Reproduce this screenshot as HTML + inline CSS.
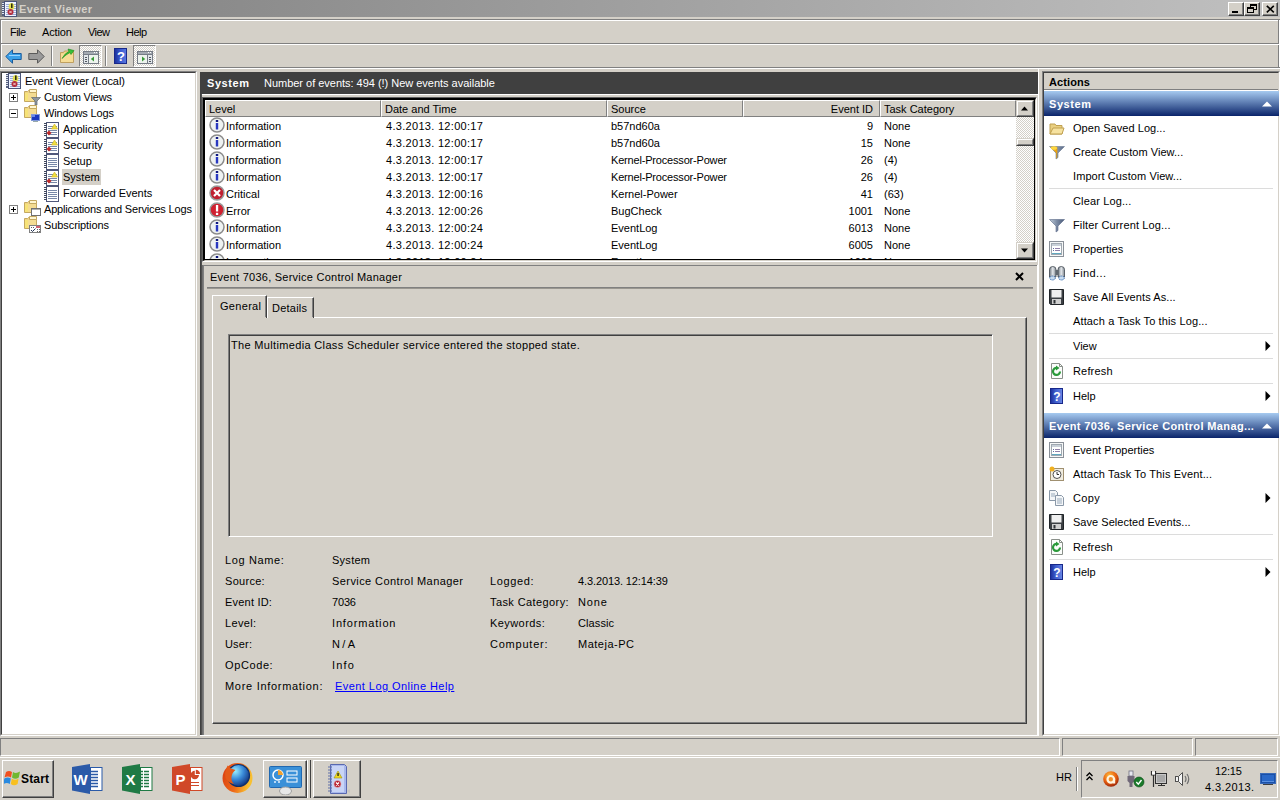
<!DOCTYPE html>
<html><head><meta charset="utf-8"><style>
html,body{margin:0;padding:0;width:1280px;height:800px;overflow:hidden;}
body{position:relative;font-family:"Liberation Sans",sans-serif;font-size:11px;color:#000;}
.a{position:absolute;}
.t{position:absolute;white-space:nowrap;line-height:13px;font-size:11px;}
svg{display:block}
</style></head><body>
<div class="a" style="left:0px;top:0px;width:1280px;height:800px;background:#d4d0c8;"></div>
<div class="a" style="left:0px;top:0px;width:1280px;height:17px;background:linear-gradient(to right,#808080,#c0c0c0);"></div>
<svg class="a" style="left:2px;top:1px" width="15" height="16" viewBox="0 0 15 16"><rect x="0" y="1" width="4" height="14" fill="#56607e"/>
<rect x="2.5" y="0.5" width="12" height="15" fill="#eef3ff" stroke="#4a5478"/>
<rect x="4" y="3" width="10" height="1" fill="#9aaad8"/><rect x="4" y="5" width="10" height="1" fill="#9aaad8"/><rect x="4" y="7" width="10" height="1" fill="#9aaad8"/><rect x="4" y="9" width="10" height="1" fill="#9aaad8"/><rect x="4" y="11" width="10" height="1" fill="#9aaad8"/><rect x="4" y="13" width="10" height="1" fill="#9aaad8"/>
<rect x="0" y="2" width="2" height="1" fill="#dfe4ee"/><rect x="0" y="4" width="2" height="1" fill="#dfe4ee"/><rect x="0" y="6" width="2" height="1" fill="#dfe4ee"/><rect x="0" y="8" width="2" height="1" fill="#dfe4ee"/><rect x="0" y="10" width="2" height="1" fill="#dfe4ee"/><rect x="0" y="12" width="2" height="1" fill="#dfe4ee"/>
<ellipse cx="9.5" cy="5.5" rx="2.8" ry="3.5" fill="#e6e040" opacity="0.9"/><rect x="9" y="2.5" width="1.6" height="4.5" fill="#303010"/>
<circle cx="8.5" cy="11" r="3" fill="#b42a3a"/><path d="M7.3 9.8l2.4 2.4M9.7 9.8l-2.4 2.4" stroke="#f0d0d0" stroke-width="1"/></svg>
<div class="t" style="left:19px;top:3px;font-size:11px;letter-spacing:0.425px;font-weight:bold;color:#d4d0c8;">Event Viewer</div>
<div class="a" style="left:1228px;top:2px;width:16px;height:14px;background:#d4d0c8;border-top:1px solid #ffffff;border-left:1px solid #ffffff;border-right:1px solid #404040;border-bottom:1px solid #404040;box-sizing:border-box;"></div>
<div class="a" style="left:1229px;top:3px;width:14px;height:12px;border-right:1px solid #808080;border-bottom:1px solid #808080;box-sizing:border-box;"></div>
<div class="a" style="left:1232px;top:11px;width:6px;height:2px;background:#000;"></div>
<div class="a" style="left:1244px;top:2px;width:16px;height:14px;background:#d4d0c8;border-top:1px solid #ffffff;border-left:1px solid #ffffff;border-right:1px solid #404040;border-bottom:1px solid #404040;box-sizing:border-box;"></div>
<div class="a" style="left:1245px;top:3px;width:14px;height:12px;border-right:1px solid #808080;border-bottom:1px solid #808080;box-sizing:border-box;"></div>
<div class="a" style="left:1250px;top:4px;width:7px;height:6px;border:1px solid #000;border-top-width:2px;box-sizing:border-box;"></div>
<div class="a" style="left:1247px;top:7px;width:7px;height:6px;border:1px solid #000;border-top-width:2px;box-sizing:border-box;background:#d4d0c8;"></div>
<div class="a" style="left:1262px;top:2px;width:16px;height:14px;background:#d4d0c8;border-top:1px solid #ffffff;border-left:1px solid #ffffff;border-right:1px solid #404040;border-bottom:1px solid #404040;box-sizing:border-box;"></div>
<div class="a" style="left:1263px;top:3px;width:14px;height:12px;border-right:1px solid #808080;border-bottom:1px solid #808080;box-sizing:border-box;"></div>
<svg class="a" style="left:1266px;top:5px" width="9" height="8" viewBox="0 0 9 8"><path d="M0.8 0.8l7 6.5M7.8 0.8l-7 6.5" stroke="#000" stroke-width="1.6"/></svg>
<div class="a" style="left:0px;top:17px;width:1280px;height:1px;background:#d4d0c8;"></div>
<div class="a" style="left:0px;top:18px;width:1280px;height:1px;background:#d4d0c8;"></div>
<div class="a" style="left:0px;top:19px;width:1280px;height:1px;background:#808080;"></div>
<div class="a" style="left:0px;top:20px;width:1280px;height:1px;background:#ffffff;"></div>
<div class="a" style="left:0px;top:19px;width:1px;height:50px;background:#808080;"></div>
<div class="a" style="left:1px;top:20px;width:1px;height:48px;background:#ffffff;"></div>
<div class="a" style="left:1278px;top:19px;width:1px;height:50px;background:#808080;"></div>
<div class="a" style="left:1279px;top:20px;width:1px;height:48px;background:#ffffff;"></div>
<div class="a" style="left:1px;top:43px;width:1278px;height:1px;background:#808080;"></div>
<div class="a" style="left:1px;top:44px;width:1278px;height:1px;background:#ffffff;"></div>
<div class="t" style="left:10px;top:26px;font-size:11px;letter-spacing:-0.573px;">File</div>
<div class="t" style="left:42px;top:26px;font-size:11px;letter-spacing:-0.119px;">Action</div>
<div class="t" style="left:88px;top:26px;font-size:11px;letter-spacing:-0.547px;">View</div>
<div class="t" style="left:126px;top:26px;font-size:11px;letter-spacing:-0.542px;">Help</div>
<div class="a" style="left:0px;top:67px;width:1280px;height:1px;background:#808080;"></div>
<div class="a" style="left:0px;top:68px;width:1280px;height:1px;background:#ffffff;"></div>
<svg class="a" style="left:5px;top:49px" width="17" height="15" viewBox="0 0 17 15"><path d="M0.8 7.5L7.5 0.8v3.7h8.7v6h-8.7v3.7z" fill="#3aa0e8" stroke="#1a5a9a" stroke-width="1"/><path d="M4 6.5h11" stroke="#9ad4ff" stroke-width="1"/></svg>
<svg class="a" style="left:28px;top:49px" width="17" height="15" viewBox="0 0 17 15"><path d="M16.2 7.5L9.5 0.8v3.7H0.8v6h8.7v3.7z" fill="#9a9a9a" stroke="#5a5a5a" stroke-width="1"/></svg>
<div class="a" style="left:51px;top:46px;width:1px;height:20px;background:#808080;"></div>
<div class="a" style="left:52px;top:46px;width:1px;height:20px;background:#ffffff;"></div>
<svg class="a" style="left:59px;top:47px" width="17" height="17" viewBox="0 0 17 17"><path d="M1.5 5.5h3l1-1.5h9v11.5h-13z" fill="#f2d48a" stroke="#c0a060"/><rect x="2" y="7" width="12" height="8" fill="#f6dc96"/><path d="M3 11.5Q6 6 10 4.5l-1-2.5 6 1.5-3 4-1-2Q7 7.5 3 11.5z" fill="#38c038" stroke="#1a8a1a" stroke-width="0.6"/></svg>
<div class="a" style="left:79px;top:45px;width:23px;height:22px;border-top:1px solid #808080;border-left:1px solid #808080;border-right:1px solid #ffffff;border-bottom:1px solid #ffffff;box-sizing:border-box;background:repeating-conic-gradient(#ffffff 0 25%, #d4d0c8 0 50%) 0 0/2px 2px;"></div>
<svg class="a" style="left:83px;top:51px" width="16" height="13" viewBox="0 0 16 13"><rect x="0.5" y="0.5" width="15" height="12" fill="#eef4ee" stroke="#767c86"/><rect x="1" y="1" width="14" height="2" fill="#a4aab2"/><rect x="11" y="1" width="1" height="1" fill="#fff"/><rect x="13" y="1" width="1" height="1" fill="#fff"/>
<rect x="1" y="3" width="14" height="1" fill="#767c86"/><rect x="1" y="4" width="4" height="8" fill="#e4e8ec"/><rect x="2" y="6" width="2" height="1" fill="#50585f"/><rect x="2" y="8" width="2" height="1" fill="#50585f"/><rect x="2" y="10" width="2" height="1" fill="#50585f"/>
<rect x="5" y="4" width="1" height="8" fill="#767c86"/><path d="M11 5.5v5l-3.2-2.5z" fill="#3a9a3a"/></svg>
<div class="a" style="left:105px;top:46px;width:1px;height:20px;background:#808080;"></div>
<div class="a" style="left:106px;top:46px;width:1px;height:20px;background:#ffffff;"></div>
<svg class="a" style="left:114px;top:48px" width="13" height="16" viewBox="0 0 13 16"><defs><linearGradient id="hb" x1="0" x2="1"><stop offset="0" stop-color="#1a2e9a"/><stop offset="0.5" stop-color="#3a5ad0"/><stop offset="1" stop-color="#5a7ae0"/></linearGradient></defs><rect x="0.5" y="0.5" width="12" height="15" fill="url(#hb)" stroke="#18288a"/><text x="7" y="12.5" font-family="Liberation Sans" font-weight="bold" font-size="13" fill="#fff" text-anchor="middle">?</text></svg>
<div class="a" style="left:133px;top:45px;width:23px;height:22px;border-top:1px solid #808080;border-left:1px solid #808080;border-right:1px solid #ffffff;border-bottom:1px solid #ffffff;box-sizing:border-box;background:repeating-conic-gradient(#ffffff 0 25%, #d4d0c8 0 50%) 0 0/2px 2px;"></div>
<svg class="a" style="left:137px;top:51px" width="16" height="13" viewBox="0 0 16 13"><rect x="0.5" y="0.5" width="15" height="12" fill="#eef4ee" stroke="#767c86"/><rect x="1" y="1" width="14" height="2" fill="#a4aab2"/><rect x="11" y="1" width="1" height="1" fill="#fff"/><rect x="13" y="1" width="1" height="1" fill="#fff"/>
<rect x="1" y="3" width="14" height="1" fill="#767c86"/><rect x="11" y="4" width="4" height="8" fill="#e4e8ec"/><rect x="12" y="6" width="2" height="1" fill="#50585f"/><rect x="12" y="8" width="2" height="1" fill="#50585f"/><rect x="12" y="10" width="2" height="1" fill="#50585f"/>
<rect x="10" y="4" width="1" height="8" fill="#767c86"/><path d="M5 5.5v5l3.2-2.5z" fill="#3a9a3a"/></svg>
<div class="a" style="left:0px;top:71px;width:197px;height:665px;background:#fff;border-top:1px solid #808080;border-left:1px solid #808080;border-right:1px solid #ffffff;border-bottom:1px solid #ffffff;box-sizing:border-box;"></div>
<div class="a" style="left:1px;top:72px;width:195px;height:663px;border-top:1px solid #404040;border-left:1px solid #404040;border-right:1px solid #d4d0c8;border-bottom:1px solid #d4d0c8;box-sizing:border-box;"></div>
<svg class="a" style="left:6px;top:73px" width="15" height="16" viewBox="0 0 15 16"><rect x="0" y="1" width="4" height="14" fill="#56607e"/>
<rect x="2.5" y="0.5" width="12" height="15" fill="#eef3ff" stroke="#4a5478"/>
<rect x="4" y="3" width="10" height="1" fill="#9aaad8"/><rect x="4" y="5" width="10" height="1" fill="#9aaad8"/><rect x="4" y="7" width="10" height="1" fill="#9aaad8"/><rect x="4" y="9" width="10" height="1" fill="#9aaad8"/><rect x="4" y="11" width="10" height="1" fill="#9aaad8"/><rect x="4" y="13" width="10" height="1" fill="#9aaad8"/>
<rect x="0" y="2" width="2" height="1" fill="#dfe4ee"/><rect x="0" y="4" width="2" height="1" fill="#dfe4ee"/><rect x="0" y="6" width="2" height="1" fill="#dfe4ee"/><rect x="0" y="8" width="2" height="1" fill="#dfe4ee"/><rect x="0" y="10" width="2" height="1" fill="#dfe4ee"/><rect x="0" y="12" width="2" height="1" fill="#dfe4ee"/>
<ellipse cx="9.5" cy="5.5" rx="2.8" ry="3.5" fill="#e6e040" opacity="0.9"/><rect x="9" y="2.5" width="1.6" height="4.5" fill="#303010"/>
<circle cx="8.5" cy="11" r="3" fill="#b42a3a"/><path d="M7.3 9.8l2.4 2.4M9.7 9.8l-2.4 2.4" stroke="#f0d0d0" stroke-width="1"/></svg>
<div class="t" style="left:25px;top:75px;font-size:11px;letter-spacing:-0.070px;">Event Viewer (Local)</div>
<div class="a" style="left:9px;top:93px;width:9px;height:9px;border:1px solid #808080;box-sizing:border-box;background:#fff;"></div>
<div class="a" style="left:11px;top:97px;width:5px;height:1px;background:#000;"></div>
<div class="a" style="left:13px;top:95px;width:1px;height:5px;background:#000;"></div>
<svg class="a" style="left:22px;top:88px" width="19" height="18" viewBox="0 0 19 18"><path d="M2.5 3.5h3l1-1h8v11h-12z" fill="#efd486" stroke="#c4a860"/><path d="M7.5 1.5h7v3h-7z" fill="#fff6d0" stroke="#c4a860"/>
<rect x="3" y="5" width="11" height="8" fill="#f4dc92"/><rect x="3" y="5" width="3" height="8" fill="#f8e66e" opacity="0.7"/><path d="M9.5 9.5h9l-3.5 3.5v4h-2v-4z" fill="#9098a0" stroke="#606870" stroke-width="0.7"/></svg>
<div class="t" style="left:44px;top:91px;font-size:11px;letter-spacing:-0.192px;">Custom Views</div>
<div class="a" style="left:9px;top:109px;width:9px;height:9px;border:1px solid #808080;box-sizing:border-box;background:#fff;"></div>
<div class="a" style="left:11px;top:113px;width:5px;height:1px;background:#000;"></div>
<svg class="a" style="left:22px;top:104px" width="19" height="18" viewBox="0 0 19 18"><path d="M2.5 3.5h3l1-1h8v11h-12z" fill="#efd486" stroke="#c4a860"/><path d="M7.5 1.5h7v3h-7z" fill="#fff6d0" stroke="#c4a860"/>
<rect x="3" y="5" width="11" height="8" fill="#f4dc92"/><rect x="3" y="5" width="3" height="8" fill="#f8e66e" opacity="0.7"/><rect x="9.5" y="10.5" width="8" height="6" fill="#1a38c0" stroke="#8098d8"/><rect x="10" y="11" width="3" height="2" fill="#6a88e8"/><rect x="11" y="17" width="5" height="1" fill="#9aa"/></svg>
<div class="t" style="left:44px;top:107px;font-size:11px;letter-spacing:-0.142px;">Windows Logs</div>
<svg class="a" style="left:44px;top:122px" width="15" height="16" viewBox="0 0 15 16"><rect x="2.5" y="0.5" width="12" height="15" fill="#fff" stroke="#50587a"/><rect x="4" y="4" width="9" height="1" fill="#7888a8"/><rect x="4" y="6" width="9" height="1" fill="#7888a8"/><rect x="4" y="8" width="9" height="1" fill="#7888a8"/><rect x="4" y="10" width="9" height="1" fill="#7888a8"/><rect x="4" y="12" width="9" height="1" fill="#7888a8"/><rect x="0" y="1" width="3" height="1" fill="#40485e"/><rect x="0" y="3" width="3" height="1" fill="#40485e"/><rect x="0" y="5" width="3" height="1" fill="#40485e"/><rect x="0" y="7" width="3" height="1" fill="#40485e"/><rect x="0" y="9" width="3" height="1" fill="#40485e"/><rect x="0" y="11" width="3" height="1" fill="#40485e"/><rect x="0" y="13" width="3" height="1" fill="#40485e"/><path d="M10.5 2l3 5h-6z" fill="#f0e040" stroke="#d0b020" stroke-width="0.6"/><path d="M5 8.5l2.5 2.5-2.5 2.5-2.5-2.5z" fill="#c02828"/></svg>
<div class="t" style="left:63px;top:123px;font-size:11px;">Application</div>
<svg class="a" style="left:44px;top:138px" width="15" height="16" viewBox="0 0 15 16"><rect x="2.5" y="0.5" width="12" height="15" fill="#fff" stroke="#50587a"/><rect x="4" y="4" width="9" height="1" fill="#7888a8"/><rect x="4" y="6" width="9" height="1" fill="#7888a8"/><rect x="4" y="8" width="9" height="1" fill="#7888a8"/><rect x="4" y="10" width="9" height="1" fill="#7888a8"/><rect x="4" y="12" width="9" height="1" fill="#7888a8"/><rect x="0" y="1" width="3" height="1" fill="#40485e"/><rect x="0" y="3" width="3" height="1" fill="#40485e"/><rect x="0" y="5" width="3" height="1" fill="#40485e"/><rect x="0" y="7" width="3" height="1" fill="#40485e"/><rect x="0" y="9" width="3" height="1" fill="#40485e"/><rect x="0" y="11" width="3" height="1" fill="#40485e"/><rect x="0" y="13" width="3" height="1" fill="#40485e"/><path d="M10.5 2l3 5h-6z" fill="#f0e040" stroke="#d0b020" stroke-width="0.6"/><path d="M5 8.5l2.5 2.5-2.5 2.5-2.5-2.5z" fill="#c02828"/></svg>
<div class="t" style="left:63px;top:139px;font-size:11px;">Security</div>
<svg class="a" style="left:44px;top:154px" width="15" height="16" viewBox="0 0 15 16"><rect x="2.5" y="0.5" width="12" height="15" fill="#fff" stroke="#50587a"/><rect x="4" y="4" width="9" height="1" fill="#7888a8"/><rect x="4" y="6" width="9" height="1" fill="#7888a8"/><rect x="4" y="8" width="9" height="1" fill="#7888a8"/><rect x="4" y="10" width="9" height="1" fill="#7888a8"/><rect x="4" y="12" width="9" height="1" fill="#7888a8"/><rect x="0" y="1" width="3" height="1" fill="#40485e"/><rect x="0" y="3" width="3" height="1" fill="#40485e"/><rect x="0" y="5" width="3" height="1" fill="#40485e"/><rect x="0" y="7" width="3" height="1" fill="#40485e"/><rect x="0" y="9" width="3" height="1" fill="#40485e"/><rect x="0" y="11" width="3" height="1" fill="#40485e"/><rect x="0" y="13" width="3" height="1" fill="#40485e"/></svg>
<div class="t" style="left:63px;top:155px;font-size:11px;">Setup</div>
<svg class="a" style="left:44px;top:170px" width="15" height="16" viewBox="0 0 15 16"><rect x="2.5" y="0.5" width="12" height="15" fill="#fff" stroke="#50587a"/><rect x="4" y="4" width="9" height="1" fill="#7888a8"/><rect x="4" y="6" width="9" height="1" fill="#7888a8"/><rect x="4" y="8" width="9" height="1" fill="#7888a8"/><rect x="4" y="10" width="9" height="1" fill="#7888a8"/><rect x="4" y="12" width="9" height="1" fill="#7888a8"/><rect x="0" y="1" width="3" height="1" fill="#40485e"/><rect x="0" y="3" width="3" height="1" fill="#40485e"/><rect x="0" y="5" width="3" height="1" fill="#40485e"/><rect x="0" y="7" width="3" height="1" fill="#40485e"/><rect x="0" y="9" width="3" height="1" fill="#40485e"/><rect x="0" y="11" width="3" height="1" fill="#40485e"/><rect x="0" y="13" width="3" height="1" fill="#40485e"/><path d="M10.5 2l3 5h-6z" fill="#f0e040" stroke="#d0b020" stroke-width="0.6"/><path d="M5 8.5l2.5 2.5-2.5 2.5-2.5-2.5z" fill="#c02828"/></svg>
<div class="a" style="left:62px;top:169px;width:39px;height:16px;background:#d4d0c8;"></div>
<div class="t" style="left:63px;top:171px;font-size:11px;">System</div>
<svg class="a" style="left:44px;top:186px" width="15" height="16" viewBox="0 0 15 16"><rect x="2.5" y="0.5" width="12" height="15" fill="#fff" stroke="#50587a"/><rect x="4" y="4" width="9" height="1" fill="#7888a8"/><rect x="4" y="6" width="9" height="1" fill="#7888a8"/><rect x="4" y="8" width="9" height="1" fill="#7888a8"/><rect x="4" y="10" width="9" height="1" fill="#7888a8"/><rect x="4" y="12" width="9" height="1" fill="#7888a8"/><rect x="0" y="1" width="3" height="1" fill="#40485e"/><rect x="0" y="3" width="3" height="1" fill="#40485e"/><rect x="0" y="5" width="3" height="1" fill="#40485e"/><rect x="0" y="7" width="3" height="1" fill="#40485e"/><rect x="0" y="9" width="3" height="1" fill="#40485e"/><rect x="0" y="11" width="3" height="1" fill="#40485e"/><rect x="0" y="13" width="3" height="1" fill="#40485e"/></svg>
<div class="t" style="left:63px;top:187px;font-size:11px;">Forwarded Events</div>
<div class="a" style="left:9px;top:205px;width:9px;height:9px;border:1px solid #808080;box-sizing:border-box;background:#fff;"></div>
<div class="a" style="left:11px;top:209px;width:5px;height:1px;background:#000;"></div>
<div class="a" style="left:13px;top:207px;width:1px;height:5px;background:#000;"></div>
<svg class="a" style="left:22px;top:199px" width="19" height="18" viewBox="0 0 19 18"><path d="M2.5 3.5h3l1-1h8v11h-12z" fill="#efd486" stroke="#c4a860"/><path d="M7.5 1.5h7v3h-7z" fill="#fff6d0" stroke="#c4a860"/>
<rect x="3" y="5" width="11" height="8" fill="#f4dc92"/><rect x="3" y="5" width="3" height="8" fill="#f8e66e" opacity="0.7"/><rect x="9.5" y="9.5" width="9" height="7" fill="#fff" stroke="#707070"/><rect x="10" y="10" width="8" height="1" fill="#b0b0b0"/></svg>
<div class="t" style="left:44px;top:203px;font-size:11px;letter-spacing:-0.171px;">Applications and Services Logs</div>
<svg class="a" style="left:22px;top:215px" width="19" height="18" viewBox="0 0 19 18"><path d="M2.5 3.5h3l1-1h8v11h-12z" fill="#efd486" stroke="#c4a860"/><path d="M7.5 1.5h7v3h-7z" fill="#fff6d0" stroke="#c4a860"/>
<rect x="3" y="5" width="11" height="8" fill="#f4dc92"/><rect x="3" y="5" width="3" height="8" fill="#f8e66e" opacity="0.7"/><rect x="7.5" y="10.5" width="11" height="7" fill="#fff" stroke="#808080"/><rect x="14" y="11" width="4" height="2" fill="#d06070"/><path d="M9 15l1.5 1.5 3-3" stroke="#203050" fill="none" stroke-width="1"/><rect x="15" y="14" width="1" height="1" fill="#606060"/><rect x="17" y="14" width="1" height="1" fill="#606060"/><rect x="15" y="16" width="1" height="1" fill="#606060"/><rect x="17" y="16" width="1" height="1" fill="#606060"/><rect x="9" y="12" width="1" height="1" fill="#606060"/><rect x="11" y="12" width="1" height="1" fill="#606060"/></svg>
<div class="t" style="left:44px;top:219px;font-size:11px;letter-spacing:-0.089px;">Subscriptions</div>
<div class="a" style="left:200px;top:71px;width:839px;height:665px;background:#d4d0c8;"></div>
<div class="a" style="left:200px;top:72px;width:838px;height:22px;background:#404040;"></div>
<div class="t" style="left:207px;top:77px;font-size:11px;letter-spacing:0.569px;font-weight:bold;color:#fff;">System</div>
<div class="t" style="left:264px;top:77px;font-size:11px;letter-spacing:-0.019px;color:#fff;">Number of events: 494 (!) New events available</div>
<div class="a" style="left:200px;top:94px;width:838px;height:1px;background:#ffffff;"></div>
<div class="a" style="left:200px;top:72px;width:1px;height:663px;background:#404040;"></div>
<div class="a" style="left:201px;top:94px;width:1px;height:641px;background:#505050;"></div>
<div class="a" style="left:202px;top:97px;width:835px;height:165px;border-top:1px solid #606060;border-left:1px solid #606060;border-right:1px solid #fff;border-bottom:1px solid #fff;box-sizing:border-box;"></div>
<div class="a" style="left:203px;top:98px;width:833px;height:163px;border-top:2px solid #000;border-left:2px solid #000;border-right:1px solid #d4d0c8;border-bottom:1px solid #d4d0c8;box-sizing:border-box;"></div>
<div class="a" style="left:203px;top:98px;width:832px;height:162px;border-top:2px solid #000;border-left:2px solid #000;border-right:1px solid #000;border-bottom:1px solid #000;box-sizing:border-box;background:#fff;"></div>
<div class="a" style="left:205px;top:100px;width:829px;height:159px;overflow:hidden;background:#fff">
<div class="a" style="left:0px;top:0px;width:811px;height:17px;background:#d4d0c8;"></div>
<div class="a" style="left:0px;top:0px;width:176px;height:17px;border-top:1px solid #fff;border-left:1px solid #fff;border-right:1px solid #808080;border-bottom:1px solid #808080;box-sizing:border-box;background:#d4d0c8;"></div>
<div class="a" style="left:176px;top:0px;width:226px;height:17px;border-top:1px solid #fff;border-left:1px solid #fff;border-right:1px solid #808080;border-bottom:1px solid #808080;box-sizing:border-box;background:#d4d0c8;"></div>
<div class="a" style="left:402px;top:0px;width:136px;height:17px;border-top:1px solid #fff;border-left:1px solid #fff;border-right:1px solid #808080;border-bottom:1px solid #808080;box-sizing:border-box;background:#d4d0c8;"></div>
<div class="a" style="left:538px;top:0px;width:137px;height:17px;border-top:1px solid #fff;border-left:1px solid #fff;border-right:1px solid #808080;border-bottom:1px solid #808080;box-sizing:border-box;background:#d4d0c8;"></div>
<div class="a" style="left:675px;top:0px;width:136px;height:17px;border-top:1px solid #fff;border-left:1px solid #fff;border-right:1px solid #808080;border-bottom:1px solid #808080;box-sizing:border-box;background:#d4d0c8;"></div>
<div class="t" style="left:4px;top:3px;">Level</div>
<div class="t" style="left:180px;top:3px;">Date and Time</div>
<div class="t" style="left:406px;top:3px;">Source</div>
<div class="t" style="left:368px;width:300px;text-align:right;top:3px;">Event ID</div>
<div class="t" style="left:679px;top:3px;">Task Category</div>
<svg class="a" style="left:4px;top:17px" width="16" height="16" viewBox="0 0 16 16"><circle cx="8" cy="8" r="7" fill="#eef2f2" stroke="#8c8c8c" stroke-width="1.5"/><rect x="6.8" y="3" width="2.4" height="2" fill="#101880"/><rect x="6.8" y="6" width="2.4" height="6.5" fill="#2838c0"/></svg>
<div class="t" style="left:21px;top:20px;">Information</div>
<div class="t" style="left:181px;top:20px;letter-spacing:0.301px;">4.3.2013. 12:00:17</div>
<div class="t" style="left:406px;top:20px;">b57nd60a</div>
<div class="t" style="left:368px;width:300px;text-align:right;top:20px;">9</div>
<div class="t" style="left:679px;top:20px;">None</div>
<svg class="a" style="left:4px;top:34px" width="16" height="16" viewBox="0 0 16 16"><circle cx="8" cy="8" r="7" fill="#eef2f2" stroke="#8c8c8c" stroke-width="1.5"/><rect x="6.8" y="3" width="2.4" height="2" fill="#101880"/><rect x="6.8" y="6" width="2.4" height="6.5" fill="#2838c0"/></svg>
<div class="t" style="left:21px;top:37px;">Information</div>
<div class="t" style="left:181px;top:37px;letter-spacing:0.301px;">4.3.2013. 12:00:17</div>
<div class="t" style="left:406px;top:37px;">b57nd60a</div>
<div class="t" style="left:368px;width:300px;text-align:right;top:37px;">15</div>
<div class="t" style="left:679px;top:37px;">None</div>
<svg class="a" style="left:4px;top:51px" width="16" height="16" viewBox="0 0 16 16"><circle cx="8" cy="8" r="7" fill="#eef2f2" stroke="#8c8c8c" stroke-width="1.5"/><rect x="6.8" y="3" width="2.4" height="2" fill="#101880"/><rect x="6.8" y="6" width="2.4" height="6.5" fill="#2838c0"/></svg>
<div class="t" style="left:21px;top:54px;">Information</div>
<div class="t" style="left:181px;top:54px;letter-spacing:0.301px;">4.3.2013. 12:00:17</div>
<div class="t" style="left:406px;top:54px;letter-spacing:-0.183px;">Kernel-Processor-Power</div>
<div class="t" style="left:368px;width:300px;text-align:right;top:54px;">26</div>
<div class="t" style="left:679px;top:54px;">(4)</div>
<svg class="a" style="left:4px;top:68px" width="16" height="16" viewBox="0 0 16 16"><circle cx="8" cy="8" r="7" fill="#eef2f2" stroke="#8c8c8c" stroke-width="1.5"/><rect x="6.8" y="3" width="2.4" height="2" fill="#101880"/><rect x="6.8" y="6" width="2.4" height="6.5" fill="#2838c0"/></svg>
<div class="t" style="left:21px;top:71px;">Information</div>
<div class="t" style="left:181px;top:71px;letter-spacing:0.301px;">4.3.2013. 12:00:17</div>
<div class="t" style="left:406px;top:71px;letter-spacing:-0.183px;">Kernel-Processor-Power</div>
<div class="t" style="left:368px;width:300px;text-align:right;top:71px;">26</div>
<div class="t" style="left:679px;top:71px;">(4)</div>
<svg class="a" style="left:4px;top:85px" width="16" height="16" viewBox="0 0 16 16"><circle cx="8" cy="8" r="7" fill="#c02030" stroke="#9a9a9a" stroke-width="1.5"/><path d="M5 5l6 6M11 5l-6 6" stroke="#fff" stroke-width="2.2"/></svg>
<div class="t" style="left:21px;top:88px;">Critical</div>
<div class="t" style="left:181px;top:88px;letter-spacing:0.301px;">4.3.2013. 12:00:16</div>
<div class="t" style="left:406px;top:88px;">Kernel-Power</div>
<div class="t" style="left:368px;width:300px;text-align:right;top:88px;">41</div>
<div class="t" style="left:679px;top:88px;">(63)</div>
<svg class="a" style="left:4px;top:102px" width="16" height="16" viewBox="0 0 16 16"><circle cx="8" cy="8" r="7" fill="#d02030" stroke="#9a9a9a" stroke-width="1.5"/><rect x="6.9" y="3" width="2.3" height="6.5" fill="#fff"/><rect x="6.9" y="10.8" width="2.3" height="2.2" fill="#fff"/></svg>
<div class="t" style="left:21px;top:105px;">Error</div>
<div class="t" style="left:181px;top:105px;letter-spacing:0.301px;">4.3.2013. 12:00:26</div>
<div class="t" style="left:406px;top:105px;">BugCheck</div>
<div class="t" style="left:368px;width:300px;text-align:right;top:105px;">1001</div>
<div class="t" style="left:679px;top:105px;">None</div>
<svg class="a" style="left:4px;top:119px" width="16" height="16" viewBox="0 0 16 16"><circle cx="8" cy="8" r="7" fill="#eef2f2" stroke="#8c8c8c" stroke-width="1.5"/><rect x="6.8" y="3" width="2.4" height="2" fill="#101880"/><rect x="6.8" y="6" width="2.4" height="6.5" fill="#2838c0"/></svg>
<div class="t" style="left:21px;top:122px;">Information</div>
<div class="t" style="left:181px;top:122px;letter-spacing:0.301px;">4.3.2013. 12:00:24</div>
<div class="t" style="left:406px;top:122px;">EventLog</div>
<div class="t" style="left:368px;width:300px;text-align:right;top:122px;">6013</div>
<div class="t" style="left:679px;top:122px;">None</div>
<svg class="a" style="left:4px;top:136px" width="16" height="16" viewBox="0 0 16 16"><circle cx="8" cy="8" r="7" fill="#eef2f2" stroke="#8c8c8c" stroke-width="1.5"/><rect x="6.8" y="3" width="2.4" height="2" fill="#101880"/><rect x="6.8" y="6" width="2.4" height="6.5" fill="#2838c0"/></svg>
<div class="t" style="left:21px;top:139px;">Information</div>
<div class="t" style="left:181px;top:139px;letter-spacing:0.301px;">4.3.2013. 12:00:24</div>
<div class="t" style="left:406px;top:139px;">EventLog</div>
<div class="t" style="left:368px;width:300px;text-align:right;top:139px;">6005</div>
<div class="t" style="left:679px;top:139px;">None</div>
<svg class="a" style="left:4px;top:153px" width="16" height="16" viewBox="0 0 16 16"><circle cx="8" cy="8" r="7" fill="#eef2f2" stroke="#8c8c8c" stroke-width="1.5"/><rect x="6.8" y="3" width="2.4" height="2" fill="#101880"/><rect x="6.8" y="6" width="2.4" height="6.5" fill="#2838c0"/></svg>
<div class="t" style="left:21px;top:156px;">Information</div>
<div class="t" style="left:181px;top:156px;letter-spacing:0.301px;">4.3.2013. 12:00:24</div>
<div class="t" style="left:406px;top:156px;">EventLog</div>
<div class="t" style="left:368px;width:300px;text-align:right;top:156px;">1000</div>
<div class="t" style="left:679px;top:156px;">None</div>
<div class="a" style="left:811px;top:0px;width:18px;height:159px;background:repeating-conic-gradient(#ffffff 0 25%, #d4d0c8 0 50%) 0 0/2px 2px;"></div>
<div class="a" style="left:811px;top:0px;width:18px;height:17px;border-top:1px solid #d4d0c8;border-left:1px solid #d4d0c8;border-right:1px solid #404040;border-bottom:1px solid #404040;box-sizing:border-box;background:#d4d0c8;"></div>
<div class="a" style="left:812px;top:1px;width:16px;height:15px;border-top:1px solid #fff;border-left:1px solid #fff;border-right:1px solid #808080;border-bottom:1px solid #808080;box-sizing:border-box;"></div>
<svg class="a" style="left:816px;top:6px" width="8" height="5" viewBox="0 0 8 5"><path d="M0 4.5L3.5 0.5L7 4.5z" fill="#000"/></svg>
<div class="a" style="left:811px;top:38px;width:18px;height:8px;border-top:1px solid #d4d0c8;border-left:1px solid #d4d0c8;border-right:1px solid #404040;border-bottom:1px solid #404040;box-sizing:border-box;background:#d4d0c8;"></div>
<div class="a" style="left:812px;top:39px;width:16px;height:6px;border-top:1px solid #fff;border-left:1px solid #fff;border-right:1px solid #808080;border-bottom:1px solid #808080;box-sizing:border-box;"></div>
<div class="a" style="left:811px;top:142px;width:18px;height:17px;border-top:1px solid #d4d0c8;border-left:1px solid #d4d0c8;border-right:1px solid #404040;border-bottom:1px solid #404040;box-sizing:border-box;background:#d4d0c8;"></div>
<div class="a" style="left:812px;top:143px;width:16px;height:15px;border-top:1px solid #fff;border-left:1px solid #fff;border-right:1px solid #808080;border-bottom:1px solid #808080;box-sizing:border-box;"></div>
<svg class="a" style="left:816px;top:148px" width="8" height="5" viewBox="0 0 8 5"><path d="M0 0.5L3.5 4.5L7 0.5z" fill="#000"/></svg>
</div>
<div class="a" style="left:203px;top:261px;width:834px;height:1px;background:#ffffff;"></div>
<div class="a" style="left:203px;top:265px;width:835px;height:471px;border-top:1px solid #808080;border-left:1px solid #808080;box-sizing:border-box;"></div>
<div class="a" style="left:1037px;top:265px;width:1px;height:470px;background:#ffffff;"></div>
<div class="a" style="left:200px;top:735px;width:838px;height:1px;background:#ffffff;"></div>
<div class="a" style="left:202px;top:265px;width:1px;height:470px;background:#707070;"></div>
<div class="t" style="left:210px;top:271px;font-size:11px;letter-spacing:0.248px;">Event 7036, Service Control Manager</div>
<svg class="a" style="left:1015px;top:272px" width="9" height="9" viewBox="0 0 9 9"><path d="M1 1l7 7M8 1l-7 7" stroke="#000" stroke-width="2"/></svg>
<div class="a" style="left:207px;top:287px;width:826px;height:1px;background:#808080;"></div>
<div class="a" style="left:207px;top:288px;width:826px;height:1px;background:#9a9790;"></div>
<div class="a" style="left:212px;top:317px;width:815px;height:407px;border-top:1px solid #fff;border-left:1px solid #fff;border-right:1px solid #404040;border-bottom:1px solid #404040;box-sizing:border-box;"></div>
<div class="a" style="left:213px;top:318px;width:813px;height:405px;border-right:1px solid #808080;border-bottom:1px solid #808080;box-sizing:border-box;"></div>
<div class="a" style="left:267px;top:297px;width:47px;height:21px;background:#d4d0c8;border-top:1px solid #fff;border-left:1px solid #fff;border-right:1px solid #404040;box-sizing:border-box;"></div>
<div class="a" style="left:312px;top:298px;width:1px;height:19px;background:#808080;"></div>
<div class="a" style="left:212px;top:295px;width:55px;height:23px;background:#d4d0c8;border-top:1px solid #fff;border-left:1px solid #fff;border-right:1px solid #404040;box-sizing:border-box;"></div>
<div class="a" style="left:265px;top:296px;width:1px;height:21px;background:#808080;"></div>
<div class="t" style="left:220px;top:300px;font-size:11px;letter-spacing:0.307px;">General</div>
<div class="t" style="left:272px;top:302px;font-size:11px;letter-spacing:0.229px;">Details</div>
<div class="a" style="left:228px;top:334px;width:765px;height:203px;border-top:1px solid #808080;border-left:1px solid #808080;border-right:1px solid #fff;border-bottom:1px solid #fff;box-sizing:border-box;"></div>
<div class="a" style="left:229px;top:335px;width:763px;height:201px;border-top:1px solid #404040;border-left:1px solid #404040;box-sizing:border-box;"></div>
<div class="t" style="left:231px;top:339px;font-size:11px;letter-spacing:0.338px;">The Multimedia Class Scheduler service entered the stopped state.</div>
<div class="t" style="left:225px;top:554px;font-size:11px;letter-spacing:0.620px;">Log Name:</div>
<div class="t" style="left:332px;top:554px;font-size:11px;letter-spacing:0.263px;">System</div>
<div class="t" style="left:225px;top:575px;font-size:11px;letter-spacing:0.294px;">Source:</div>
<div class="t" style="left:332px;top:575px;font-size:11px;letter-spacing:0.422px;">Service Control Manager</div>
<div class="t" style="left:490px;top:575px;font-size:11px;letter-spacing:0.631px;">Logged:</div>
<div class="t" style="left:578px;top:575px;font-size:11px;letter-spacing:-0.110px;">4.3.2013. 12:14:39</div>
<div class="t" style="left:225px;top:596px;font-size:11px;letter-spacing:0.202px;">Event ID:</div>
<div class="t" style="left:332px;top:596px;font-size:11px;letter-spacing:-0.167px;">7036</div>
<div class="t" style="left:490px;top:596px;font-size:11px;letter-spacing:0.407px;">Task Category:</div>
<div class="t" style="left:578px;top:596px;font-size:11px;letter-spacing:0.896px;">None</div>
<div class="t" style="left:225px;top:617px;font-size:11px;letter-spacing:0.325px;">Level:</div>
<div class="t" style="left:332px;top:617px;font-size:11px;letter-spacing:0.844px;">Information</div>
<div class="t" style="left:490px;top:617px;font-size:11px;letter-spacing:0.428px;">Keywords:</div>
<div class="t" style="left:578px;top:617px;font-size:11px;letter-spacing:0.094px;">Classic</div>
<div class="t" style="left:225px;top:638px;font-size:11px;letter-spacing:0.180px;">User:</div>
<div class="t" style="left:332px;top:638px;font-size:11px;letter-spacing:2.328px;">N/A</div>
<div class="t" style="left:490px;top:638px;font-size:11px;letter-spacing:0.778px;">Computer:</div>
<div class="t" style="left:578px;top:638px;font-size:11px;letter-spacing:0.504px;">Mateja-PC</div>
<div class="t" style="left:225px;top:659px;font-size:11px;letter-spacing:0.606px;">OpCode:</div>
<div class="t" style="left:332px;top:659px;font-size:11px;letter-spacing:1.208px;">Info</div>
<div class="t" style="left:225px;top:680px;font-size:11px;letter-spacing:0.703px;">More Information:</div>
<div class="t" style="left:335px;top:680px;font-size:11px;letter-spacing:0.442px;color:#0000ff;text-decoration:underline;">Event Log Online Help</div>
<div class="a" style="left:1038px;top:69px;width:1px;height:667px;background:#ffffff;"></div>
<div class="a" style="left:1042px;top:71px;width:238px;height:665px;background:#fff;border-top:1px solid #808080;border-left:1px solid #808080;border-right:1px solid #ffffff;border-bottom:1px solid #ffffff;box-sizing:border-box;"></div>
<div class="a" style="left:1043px;top:72px;width:236px;height:663px;border-top:1px solid #404040;border-left:1px solid #404040;border-right:1px solid #d4d0c8;border-bottom:1px solid #d4d0c8;box-sizing:border-box;"></div>
<div class="a" style="left:1044px;top:73px;width:234px;height:16px;background:#d4d0c8;"></div>
<div class="a" style="left:1044px;top:89px;width:234px;height:1px;background:#808080;"></div>
<div class="a" style="left:1044px;top:90px;width:234px;height:1px;background:#ffffff;"></div>
<div class="t" style="left:1049px;top:76px;font-size:11px;letter-spacing:0.109px;font-weight:bold;">Actions</div>
<div class="a" style="left:1044px;top:91px;width:235px;height:25px;background:linear-gradient(to bottom,#a6caf0,#0a246a);"></div>
<div class="t" style="left:1049px;top:98px;font-size:11px;letter-spacing:0.569px;font-weight:bold;color:#fff;">System</div>
<svg class="a" style="left:1262px;top:101px" width="10" height="6" viewBox="0 0 10 6"><path d="M0 5.5L5 0.5L10 5.5z" fill="#fff"/></svg>
<svg class="a" style="left:1049px;top:120px" width="16" height="16" viewBox="0 0 16 16"><path d="M1 4h5l1 1.5h6v8.5H1z" fill="#e9cf80" stroke="#c0a050"/><path d="M1 14l3-6h11l-2 6z" fill="#f6e2a0" stroke="#c0a050"/></svg>
<div class="t" style="left:1073px;top:122px;font-size:11px;letter-spacing:0.047px;">Open Saved Log...</div>
<svg class="a" style="left:1049px;top:144px" width="16" height="16" viewBox="0 0 16 16"><defs><linearGradient id="fy" x1="0" x2="1"><stop offset="0" stop-color="#f8c020"/><stop offset="0.5" stop-color="#e8a010"/><stop offset="0.55" stop-color="#8090a8"/><stop offset="1" stop-color="#5a6a88"/></linearGradient></defs>
<path d="M0.5 2.5h15L9 9v4.5l-2 1.5V9z" fill="url(#fy)" stroke="#6a7890" stroke-width="0.6"/><ellipse cx="5" cy="4" rx="3" ry="1.8" fill="#ffd840"/></svg>
<div class="t" style="left:1073px;top:146px;font-size:11px;letter-spacing:0.050px;">Create Custom View...</div>
<div class="t" style="left:1073px;top:170px;font-size:11px;letter-spacing:0.087px;">Import Custom View...</div>
<div class="t" style="left:1073px;top:195px;font-size:11px;letter-spacing:0.136px;">Clear Log...</div>
<svg class="a" style="left:1049px;top:217px" width="16" height="16" viewBox="0 0 16 16"><defs><linearGradient id="fg" x1="0" x2="1"><stop offset="0" stop-color="#c0ccd8"/><stop offset="0.5" stop-color="#7a8aa4"/><stop offset="1" stop-color="#4a5a78"/></linearGradient></defs>
<path d="M0.5 2.5h15L9 9v4.5l-2 1.5V9z" fill="url(#fg)" stroke="#5a6a88" stroke-width="0.6"/></svg>
<div class="t" style="left:1073px;top:219px;font-size:11px;letter-spacing:0.138px;">Filter Current Log...</div>
<svg class="a" style="left:1049px;top:241px" width="16" height="16" viewBox="0 0 16 16"><rect x="0.5" y="0.5" width="14" height="15" fill="#f6f8f8" stroke="#8a9098"/><rect x="2.5" y="2.5" width="10" height="11" fill="#fff" stroke="#a0a8b0"/><rect x="3" y="3" width="9" height="2" fill="#c8d0d8"/>
<rect x="4" y="7" width="1" height="1" fill="#6070a0"/><rect x="6" y="7" width="5" height="1" fill="#9080a8"/><rect x="4" y="9" width="1" height="1" fill="#6070a0"/><rect x="6" y="9" width="5" height="1" fill="#9080a8"/><rect x="3" y="12" width="9" height="1" fill="#60a8c0"/></svg>
<div class="t" style="left:1073px;top:243px;font-size:11px;letter-spacing:0.000px;">Properties</div>
<svg class="a" style="left:1049px;top:265px" width="16" height="16" viewBox="0 0 16 16"><defs><linearGradient id="bn" x1="0" x2="1"><stop offset="0" stop-color="#707880"/><stop offset="0.5" stop-color="#e4e8ec"/><stop offset="1" stop-color="#808890"/></linearGradient></defs>
<path d="M0.5 12V4.5Q0.5 1.5 3.8 1.5Q7 1.5 7 4.5V12z" fill="url(#bn)" stroke="#404850" stroke-width="0.8"/><path d="M9 12V4.5Q9 1.5 12.2 1.5Q15.5 1.5 15.5 4.5V12z" fill="url(#bn)" stroke="#404850" stroke-width="0.8"/>
<rect x="7" y="5" width="2" height="5" fill="#606870"/>
<ellipse cx="3.5" cy="13" rx="2.8" ry="2" fill="#c8dcf0" stroke="#2a60a8" stroke-width="1" stroke-dasharray="1 0.8"/><ellipse cx="12.5" cy="13" rx="2.8" ry="2" fill="#c8dcf0" stroke="#2a60a8" stroke-width="1" stroke-dasharray="1 0.8"/></svg>
<div class="t" style="left:1073px;top:267px;font-size:11px;letter-spacing:0.417px;">Find...</div>
<svg class="a" style="left:1049px;top:289px" width="16" height="16" viewBox="0 0 16 16"><path d="M0.5 0.5h14v15h-13l-1-1z" fill="#3c4044" stroke="#202428"/><rect x="2.5" y="1" width="10" height="7.5" fill="#f0f0f0"/><rect x="3" y="10" width="9" height="5" fill="#d0d0d0"/><rect x="4.5" y="11" width="2" height="3.5" fill="#303438"/></svg>
<div class="t" style="left:1073px;top:291px;font-size:11px;letter-spacing:0.087px;">Save All Events As...</div>
<div class="t" style="left:1073px;top:315px;font-size:11px;letter-spacing:0.130px;">Attach a Task To this Log...</div>
<div class="t" style="left:1073px;top:340px;font-size:11px;letter-spacing:0.000px;">View</div>
<svg class="a" style="left:1265px;top:341px" width="6" height="10" viewBox="0 0 6 10"><path d="M0.5 0L5.5 5L0.5 10z" fill="#000"/></svg>
<svg class="a" style="left:1049px;top:363px" width="16" height="16" viewBox="0 0 16 16"><path d="M2.5 0.5h8l3 3v12h-11z" fill="#fbfdfb" stroke="#8a908a"/><path d="M10.5 0.5v3h3" fill="none" stroke="#8a908a"/>
<path d="M11 8.5A3.5 3.5 0 1 1 8 5" stroke="#2a9a3a" stroke-width="2.2" fill="none"/><path d="M7 2.5l3.5 2.5-3.5 2.5z" fill="#2a9a3a"/></svg>
<div class="t" style="left:1073px;top:365px;font-size:11px;letter-spacing:0.167px;">Refresh</div>
<svg class="a" style="left:1049px;top:388px" width="16" height="16" viewBox="0 0 16 16"><defs><linearGradient id="hb2" x1="0" x2="1"><stop offset="0" stop-color="#1a2e9a"/><stop offset="0.45" stop-color="#4060d0"/><stop offset="1" stop-color="#6a88e4"/></linearGradient></defs><rect x="1.5" y="0.5" width="12" height="15" fill="url(#hb2)" stroke="#18288a"/><text x="8" y="12.5" font-family="Liberation Sans" font-weight="bold" font-size="12" fill="#fff" text-anchor="middle">?</text></svg>
<div class="t" style="left:1073px;top:390px;font-size:11px;letter-spacing:0.000px;">Help</div>
<svg class="a" style="left:1265px;top:391px" width="6" height="10" viewBox="0 0 6 10"><path d="M0.5 0L5.5 5L0.5 10z" fill="#000"/></svg>
<div class="a" style="left:1049px;top:188px;width:224px;height:1px;background:#dcdcdc;"></div>
<div class="a" style="left:1049px;top:333px;width:224px;height:1px;background:#dcdcdc;"></div>
<div class="a" style="left:1049px;top:358px;width:224px;height:1px;background:#dcdcdc;"></div>
<div class="a" style="left:1049px;top:383px;width:224px;height:1px;background:#dcdcdc;"></div>
<div class="a" style="left:1044px;top:413px;width:235px;height:25px;background:linear-gradient(to bottom,#a6caf0,#0a246a);"></div>
<div class="t" style="left:1049px;top:420px;font-size:11px;letter-spacing:0.369px;font-weight:bold;color:#fff;">Event 7036, Service Control Manag...</div>
<svg class="a" style="left:1262px;top:423px" width="10" height="6" viewBox="0 0 10 6"><path d="M0 5.5L5 0.5L10 5.5z" fill="#fff"/></svg>
<svg class="a" style="left:1049px;top:442px" width="16" height="16" viewBox="0 0 16 16"><rect x="0.5" y="0.5" width="14" height="15" fill="#f6f8f8" stroke="#8a9098"/><rect x="2.5" y="2.5" width="10" height="11" fill="#fff" stroke="#a0a8b0"/><rect x="3" y="3" width="9" height="2" fill="#c8d0d8"/>
<rect x="4" y="7" width="1" height="1" fill="#6070a0"/><rect x="6" y="7" width="5" height="1" fill="#9080a8"/><rect x="4" y="9" width="1" height="1" fill="#6070a0"/><rect x="6" y="9" width="5" height="1" fill="#9080a8"/><rect x="3" y="12" width="9" height="1" fill="#60a8c0"/></svg>
<div class="t" style="left:1073px;top:444px;font-size:11px;letter-spacing:0.000px;">Event Properties</div>
<svg class="a" style="left:1049px;top:466px" width="16" height="16" viewBox="0 0 16 16"><rect x="1.5" y="2.5" width="13" height="12" fill="#f0ece0" stroke="#a09070"/><circle cx="8" cy="8.5" r="4" fill="#fff" stroke="#505050"/><path d="M8 6v2.5h2" stroke="#303030" fill="none"/><circle cx="3" cy="3" r="2.5" fill="#f0b020"/></svg>
<div class="t" style="left:1073px;top:468px;font-size:11px;letter-spacing:0.148px;">Attach Task To This Event...</div>
<svg class="a" style="left:1049px;top:490px" width="16" height="16" viewBox="0 0 16 16"><path d="M0.5 0.5h6l2 2v8H0.5z" fill="#f4f6f8" stroke="#8a98a8"/><path d="M6.5 5.5h6l2 2v8h-8z" fill="#f4f6f8" stroke="#8a98a8"/><path d="M8 9h5M8 11h5M8 13h5M2 4h4M2 6h4" stroke="#9ab"/></svg>
<div class="t" style="left:1073px;top:492px;font-size:11px;letter-spacing:0.333px;">Copy</div>
<svg class="a" style="left:1265px;top:493px" width="6" height="10" viewBox="0 0 6 10"><path d="M0.5 0L5.5 5L0.5 10z" fill="#000"/></svg>
<svg class="a" style="left:1049px;top:514px" width="16" height="16" viewBox="0 0 16 16"><path d="M0.5 0.5h14v15h-13l-1-1z" fill="#3c4044" stroke="#202428"/><rect x="2.5" y="1" width="10" height="7.5" fill="#f0f0f0"/><rect x="3" y="10" width="9" height="5" fill="#d0d0d0"/><rect x="4.5" y="11" width="2" height="3.5" fill="#303438"/></svg>
<div class="t" style="left:1073px;top:516px;font-size:11px;letter-spacing:0.034px;">Save Selected Events...</div>
<svg class="a" style="left:1049px;top:539px" width="16" height="16" viewBox="0 0 16 16"><path d="M2.5 0.5h8l3 3v12h-11z" fill="#fbfdfb" stroke="#8a908a"/><path d="M10.5 0.5v3h3" fill="none" stroke="#8a908a"/>
<path d="M11 8.5A3.5 3.5 0 1 1 8 5" stroke="#2a9a3a" stroke-width="2.2" fill="none"/><path d="M7 2.5l3.5 2.5-3.5 2.5z" fill="#2a9a3a"/></svg>
<div class="t" style="left:1073px;top:541px;font-size:11px;letter-spacing:0.167px;">Refresh</div>
<svg class="a" style="left:1049px;top:564px" width="16" height="16" viewBox="0 0 16 16"><defs><linearGradient id="hb2" x1="0" x2="1"><stop offset="0" stop-color="#1a2e9a"/><stop offset="0.45" stop-color="#4060d0"/><stop offset="1" stop-color="#6a88e4"/></linearGradient></defs><rect x="1.5" y="0.5" width="12" height="15" fill="url(#hb2)" stroke="#18288a"/><text x="8" y="12.5" font-family="Liberation Sans" font-weight="bold" font-size="12" fill="#fff" text-anchor="middle">?</text></svg>
<div class="t" style="left:1073px;top:566px;font-size:11px;letter-spacing:0.000px;">Help</div>
<svg class="a" style="left:1265px;top:567px" width="6" height="10" viewBox="0 0 6 10"><path d="M0.5 0L5.5 5L0.5 10z" fill="#000"/></svg>
<div class="a" style="left:1049px;top:534px;width:224px;height:1px;background:#dcdcdc;"></div>
<div class="a" style="left:1049px;top:559px;width:224px;height:1px;background:#dcdcdc;"></div>
<div class="a" style="left:0px;top:738px;width:1060px;height:18px;border-top:1px solid #808080;border-left:1px solid #808080;border-right:1px solid #fff;border-bottom:1px solid #fff;box-sizing:border-box;"></div>
<div class="a" style="left:1062px;top:738px;width:131px;height:18px;border-top:1px solid #808080;border-left:1px solid #808080;border-right:1px solid #fff;border-bottom:1px solid #fff;box-sizing:border-box;"></div>
<div class="a" style="left:1195px;top:738px;width:83px;height:18px;border-top:1px solid #808080;border-left:1px solid #808080;border-right:1px solid #fff;border-bottom:1px solid #fff;box-sizing:border-box;"></div>
<div class="a" style="left:0px;top:757px;width:1280px;height:1px;background:#ffffff;"></div>
<div class="a" style="left:2px;top:760px;width:52px;height:38px;background:#d4d0c8;border-top:1px solid #ffffff;border-left:1px solid #ffffff;border-right:1px solid #404040;border-bottom:1px solid #404040;box-sizing:border-box;"></div>
<div class="a" style="left:3px;top:761px;width:50px;height:36px;border-right:1px solid #808080;border-bottom:1px solid #808080;box-sizing:border-box;"></div>
<svg class="a" style="left:4px;top:770px" width="17" height="16" viewBox="0 0 17 16"><path d="M2 2q3-2 6 0l-1 5.5q-3-2-6.5 0z" fill="#f05020"/><path d="M9 2q3 2 7-0.5l-1.2 6q-3.5 2.5-6.8 0z" fill="#70b830"/><path d="M0.3 8.5q3.5-2 6.5 0l-1 5.5q-3-2-6.5 0z" fill="#2a8ae0"/><path d="M7.8 8.5q3.3 2.5 6.8 0l-1 5.5q-3.5 2.5-6.8 0z" fill="#f8c020"/></svg>
<div class="t" style="left:21px;top:773px;font-size:12px;letter-spacing:0.164px;font-weight:bold;">Start</div>
<svg class="a" style="left:72px;top:764px" width="31" height="31" viewBox="0 0 31 31"><path d="M0 3L18 0V30L0 26.5z" fill="#2b5aa8"/><rect x="18.5" y="3.5" width="11.5" height="23" fill="#fff" stroke="#2b5aa8"/><path d="M18 7.5h8M18 10.5h8M18 13.5h8M18 16.5h8M18 19.5h8M18 22.5h8" stroke="#2b5aa8" stroke-width="1.3"/><text x="8.5" y="21" font-family="Liberation Sans" font-weight="bold" font-size="15" fill="#fff" text-anchor="middle">W</text></svg>
<svg class="a" style="left:122px;top:764px" width="31" height="31" viewBox="0 0 31 31"><path d="M0 3L18 0V30L0 26.5z" fill="#1f7a45"/><rect x="18.5" y="3.5" width="11.5" height="23" fill="#fff" stroke="#1f7a45"/><path d="M18 7.5h3M22 7.5h5M18 10.5h3M22 10.5h5M18 13.5h3M22 13.5h5M18 16.5h3M22 16.5h5M18 19.5h3M22 19.5h5M18 22.5h3M22 22.5h5" stroke="#1f7a45" stroke-width="1.5"/><text x="8.5" y="21" font-family="Liberation Sans" font-weight="bold" font-size="15" fill="#fff" text-anchor="middle">X</text></svg>
<svg class="a" style="left:172px;top:764px" width="31" height="31" viewBox="0 0 31 31"><path d="M0 3L18 0V30L0 26.5z" fill="#d04828"/><rect x="18.5" y="3.5" width="11.5" height="23" fill="#fff" stroke="#d04828"/><path d="M27 11a4.2 4.2 0 1 1-4.2-4.2v4.2z" fill="#d04828"/><path d="M23.8 5.8v4.2H28A4.2 4.2 0 0 0 23.8 5.8z" fill="#d04828"/><path d="M19 18.5h8M19 21.5h8" stroke="#d04828" stroke-width="1.2"/><text x="8.5" y="21" font-family="Liberation Sans" font-weight="bold" font-size="15" fill="#fff" text-anchor="middle">P</text></svg>
<svg class="a" style="left:222px;top:762px" width="32" height="32" viewBox="0 0 32 32"><defs><radialGradient id="ff" cx="0.35" cy="0.3" r="0.75"><stop offset="0" stop-color="#9af0ff"/><stop offset="0.5" stop-color="#3a8ad8"/><stop offset="1" stop-color="#10307a"/></radialGradient>
<linearGradient id="fx" x1="0" y1="0" x2="1" y2="0.3"><stop offset="0" stop-color="#d83a10"/><stop offset="0.6" stop-color="#ee6a18"/><stop offset="1" stop-color="#f8c030"/></linearGradient></defs>
<circle cx="15.5" cy="16" r="15" fill="url(#fx)"/><circle cx="16.5" cy="13.5" r="11" fill="url(#ff)" stroke="#10306a" stroke-width="1.2"/>
<path d="M3 11L5.5 3.5L9 6.5L13.5 8Q10 10.5 9.5 15Q9 19 12 22Q6 21 3.5 16z" fill="#e45a18"/></svg>
<div class="a" style="left:263px;top:760px;width:44px;height:38px;background:#d4d0c8;border-top:1px solid #ffffff;border-left:1px solid #ffffff;border-right:1px solid #404040;border-bottom:1px solid #404040;box-sizing:border-box;"></div>
<div class="a" style="left:264px;top:761px;width:42px;height:36px;border-right:1px solid #808080;border-bottom:1px solid #808080;box-sizing:border-box;"></div>
<div class="a" style="left:307px;top:760px;width:4px;height:38px;border-left:1px solid #fff;border-right:1px solid #404040;box-sizing:border-box;"></div>
<svg class="a" style="left:269px;top:766px" width="33" height="29" viewBox="0 0 33 29"><rect x="0.5" y="0.5" width="32" height="21" rx="1" fill="#3a90d8" stroke="#2068b0"/><circle cx="9" cy="9" r="5" fill="none" stroke="#fff" stroke-width="1.5"/><path d="M9 4a5 5 0 0 1 5 5h-5z" fill="#f0a030"/><rect x="18" y="5" width="10" height="4" fill="none" stroke="#fff"/><rect x="18" y="12" width="10" height="4" fill="none" stroke="#fff"/><circle cx="6" cy="16" r="1" fill="#e0f0ff"/><circle cx="10" cy="16" r="1" fill="#e0f0ff"/><ellipse cx="16.5" cy="25" rx="6" ry="4" fill="#e8e8e8" stroke="#a0a0a0"/></svg>
<div class="a" style="left:313px;top:760px;width:48px;height:38px;background:#d4d0c8;border-top:1px solid #ffffff;border-left:1px solid #ffffff;border-right:1px solid #404040;border-bottom:1px solid #404040;box-sizing:border-box;"></div>
<div class="a" style="left:314px;top:761px;width:46px;height:36px;border-right:1px solid #808080;border-bottom:1px solid #808080;box-sizing:border-box;"></div>
<svg class="a" style="left:324px;top:763px" width="26" height="33" viewBox="0 0 26 33"><path d="M6.5 1.5h14l2 2v27h-16z" fill="#a8b8ec" stroke="#5868b0"/><rect x="8" y="3" width="12" height="26" fill="#c8d4f6"/>
<path d="M4 4h4M4 7h4M4 10h4M4 13h4M4 16h4M4 19h4M4 22h4M4 25h4M4 28h4" stroke="#6070a8" stroke-width="1.2"/>
<path d="M14 8l4 7h-8z" fill="#f0d820" stroke="#a09010" stroke-width="0.6"/><rect x="13.4" y="10" width="1.3" height="3" fill="#202010"/>
<circle cx="13.5" cy="21" r="3.6" fill="#b82030" stroke="#e8c0c8" stroke-width="0.6"/><path d="M12 19.5l3 3M15 19.5l-3 3" stroke="#fff" stroke-width="1.2"/>
<path d="M23 28l3 2v-4z" fill="#c0c0c0" opacity="0.6"/></svg>
<div class="t" style="left:1056px;top:771px;font-size:11px;letter-spacing:0.125px;">HR</div>
<div class="a" style="left:1076px;top:767px;width:1px;height:24px;background:#808080;"></div>
<div class="a" style="left:1077px;top:767px;width:1px;height:24px;background:#ffffff;"></div>
<div class="a" style="left:1081px;top:760px;width:197px;height:38px;border-top:1px solid #808080;border-left:1px solid #808080;border-right:1px solid #fff;border-bottom:1px solid #fff;box-sizing:border-box;"></div>
<svg class="a" style="left:1086px;top:772px" width="7" height="10" viewBox="0 0 7 10"><path d="M0.5 4l3-3 3 3M0.5 8l3-3 3 3" stroke="#000" stroke-width="1.3" fill="none"/></svg>
<svg class="a" style="left:1103px;top:771px" width="17" height="17" viewBox="0 0 17 17"><defs><radialGradient id="av" cx="0.4" cy="0.3" r="0.7"><stop offset="0" stop-color="#ffc040"/><stop offset="0.6" stop-color="#e86010"/><stop offset="1" stop-color="#a02808"/></radialGradient></defs><circle cx="8" cy="8" r="7.8" fill="url(#av)"/><circle cx="7.8" cy="8.3" r="3.3" stroke="#fff4e0" stroke-width="2.2" fill="#f09030"/><path d="M11.1 7.5v5" stroke="#fff4e0" stroke-width="2.2"/></svg>
<svg class="a" style="left:1126px;top:770px" width="19" height="18" viewBox="0 0 19 18"><rect x="3" y="1" width="4" height="5" fill="#e8e8f0" stroke="#707080" stroke-width="0.8"/><path d="M1.5 6h7v5l-2 2v4h-3v-4l-2-2z" fill="#706878"/><circle cx="13" cy="12" r="5" fill="#1a7a2a" stroke="#0a4a14" stroke-width="0.6"/><path d="M10.3 12l2 2.2 3.2-4.2" stroke="#fff" stroke-width="1.4" fill="none"/></svg>
<svg class="a" style="left:1150px;top:770px" width="18" height="18" viewBox="0 0 18 18"><rect x="5.5" y="3.5" width="11" height="10" fill="#c8c8c8" stroke="#303030"/><rect x="7" y="5" width="8" height="7" fill="#a8a8a8"/><path d="M8 15.5h7M11.5 13.5v2" stroke="#303030"/><path d="M1.5 1v4h4V1M3.5 5v12" stroke="#303030" stroke-width="1.2" fill="none"/><rect x="2" y="1.5" width="3" height="3" fill="#fff"/></svg>
<svg class="a" style="left:1174px;top:771px" width="17" height="16" viewBox="0 0 17 16"><rect x="1.5" y="5.5" width="3" height="5" fill="#f4f4f4" stroke="#505050"/><path d="M4.5 5.5l4-4v13l-4-4z" fill="#f4f4f4" stroke="#505050"/><path d="M11 5q2 3 0 6M13 3q3.5 5 0 10" stroke="#707070" stroke-width="1.2" fill="none"/></svg>
<div class="t" style="left:1215px;top:765px;font-size:11px;letter-spacing:-0.141px;">12:15</div>
<div class="t" style="left:1205px;top:781px;font-size:11px;letter-spacing:0.383px;">4.3.2013.</div>
<svg class="a" style="left:1260px;top:773px" width="17" height="13" viewBox="0 0 17 13"><rect x="0.5" y="0.5" width="15" height="10" fill="#1a50a8" stroke="#3a6ab8"/><rect x="2" y="2" width="12" height="6" fill="#2a68c8"/><rect x="2" y="8" width="12" height="1" fill="#5a90e0"/><path d="M3 11.5h10" stroke="#404040"/></svg>
</body></html>
